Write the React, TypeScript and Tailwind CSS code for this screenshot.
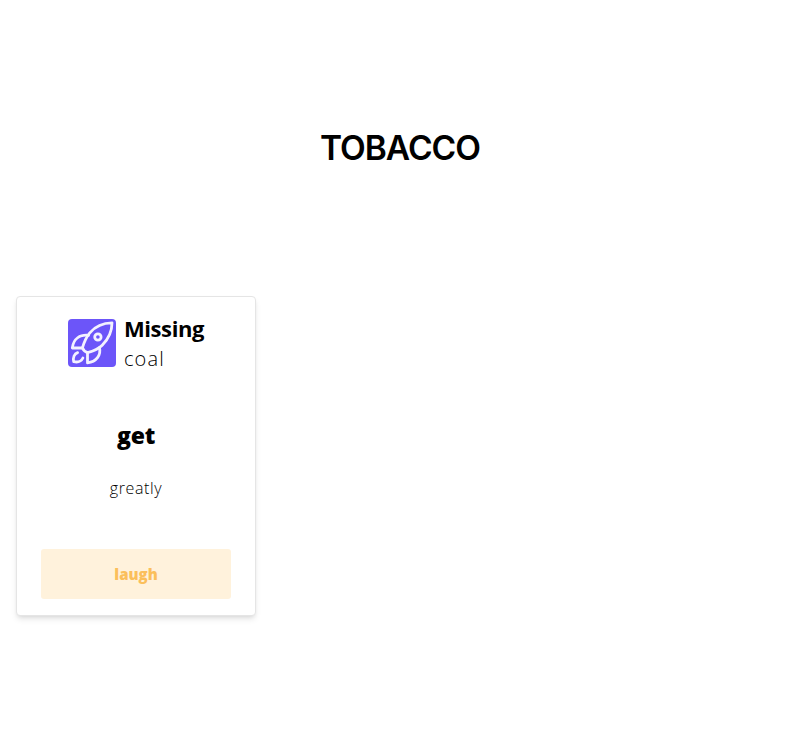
function Rocket() {
  return (
    <svg viewBox="0 0 48 48" className="size-12 shrink-0 rounded bg-[#6c55f9]" fill="none" stroke="#f3f1ff" strokeWidth="2.8" strokeLinecap="round" strokeLinejoin="round">
      <path d="M44 3.8C36 3.8 27.5 7 21.8 13.8C18 18.3 16 23.5 14.4 28.8C15.2 31 17 32.8 19.5 33.6C24.5 32.3 30.2 30.2 34.2 26.2C41 19.5 44 11.5 44 3.8Z" />
      <circle cx="29.9" cy="18" r="3.2" />
      <path d="M20.5 16.3C12 15.5 5.5 19.5 4.3 29H14.4" />
      <path d="M31.5 28.5C33.2 36 28.5 43 19.5 43.8V33.6" />
      <path d="M9.6 33.6C6.4 34.6 4.6 38.5 5.7 42.7C9.5 43.5 13.3 42.3 14.9 39" />
    </svg>
  );
}

export default function App() {
  return (
    <main className="min-h-[744px] bg-white px-4 font-['Open_Sans',sans-serif] text-black">
      <header className="flex h-[296px] items-center justify-center">
        <h1 className="font-['Inter',sans-serif] text-[33.5px] leading-10 font-semibold tracking-[-1px]">TOBACCO</h1>
      </header>
      <section className="flex h-80 w-60 flex-col rounded border border-[#e5e5e5] bg-white px-6 pt-4 pb-4 shadow-md">
        <div className="flex items-center justify-center gap-2">
          <Rocket />
          <div>
            <h2 className="text-[22px] leading-[30px] font-bold tracking-[-0.4px]">Missing</h2>
            <p className="pt-0.5 text-[20px] leading-7 font-light tracking-[1.2px]">coal</p>
          </div>
        </div>
        <h3 className="mt-[46px] text-center text-[23px] leading-8 font-extrabold tracking-[-0.2px]">get</h3>
        <p className="mt-[25px] text-center text-[16px] leading-6 font-light tracking-[0.6px]">greatly</p>
        <button className="mt-auto h-[50px] w-full rounded-[3px] bg-[#fff2dc] text-[15px] font-extrabold text-[#fbbf5b]">laugh</button>
      </section>
    </main>
  );
}
